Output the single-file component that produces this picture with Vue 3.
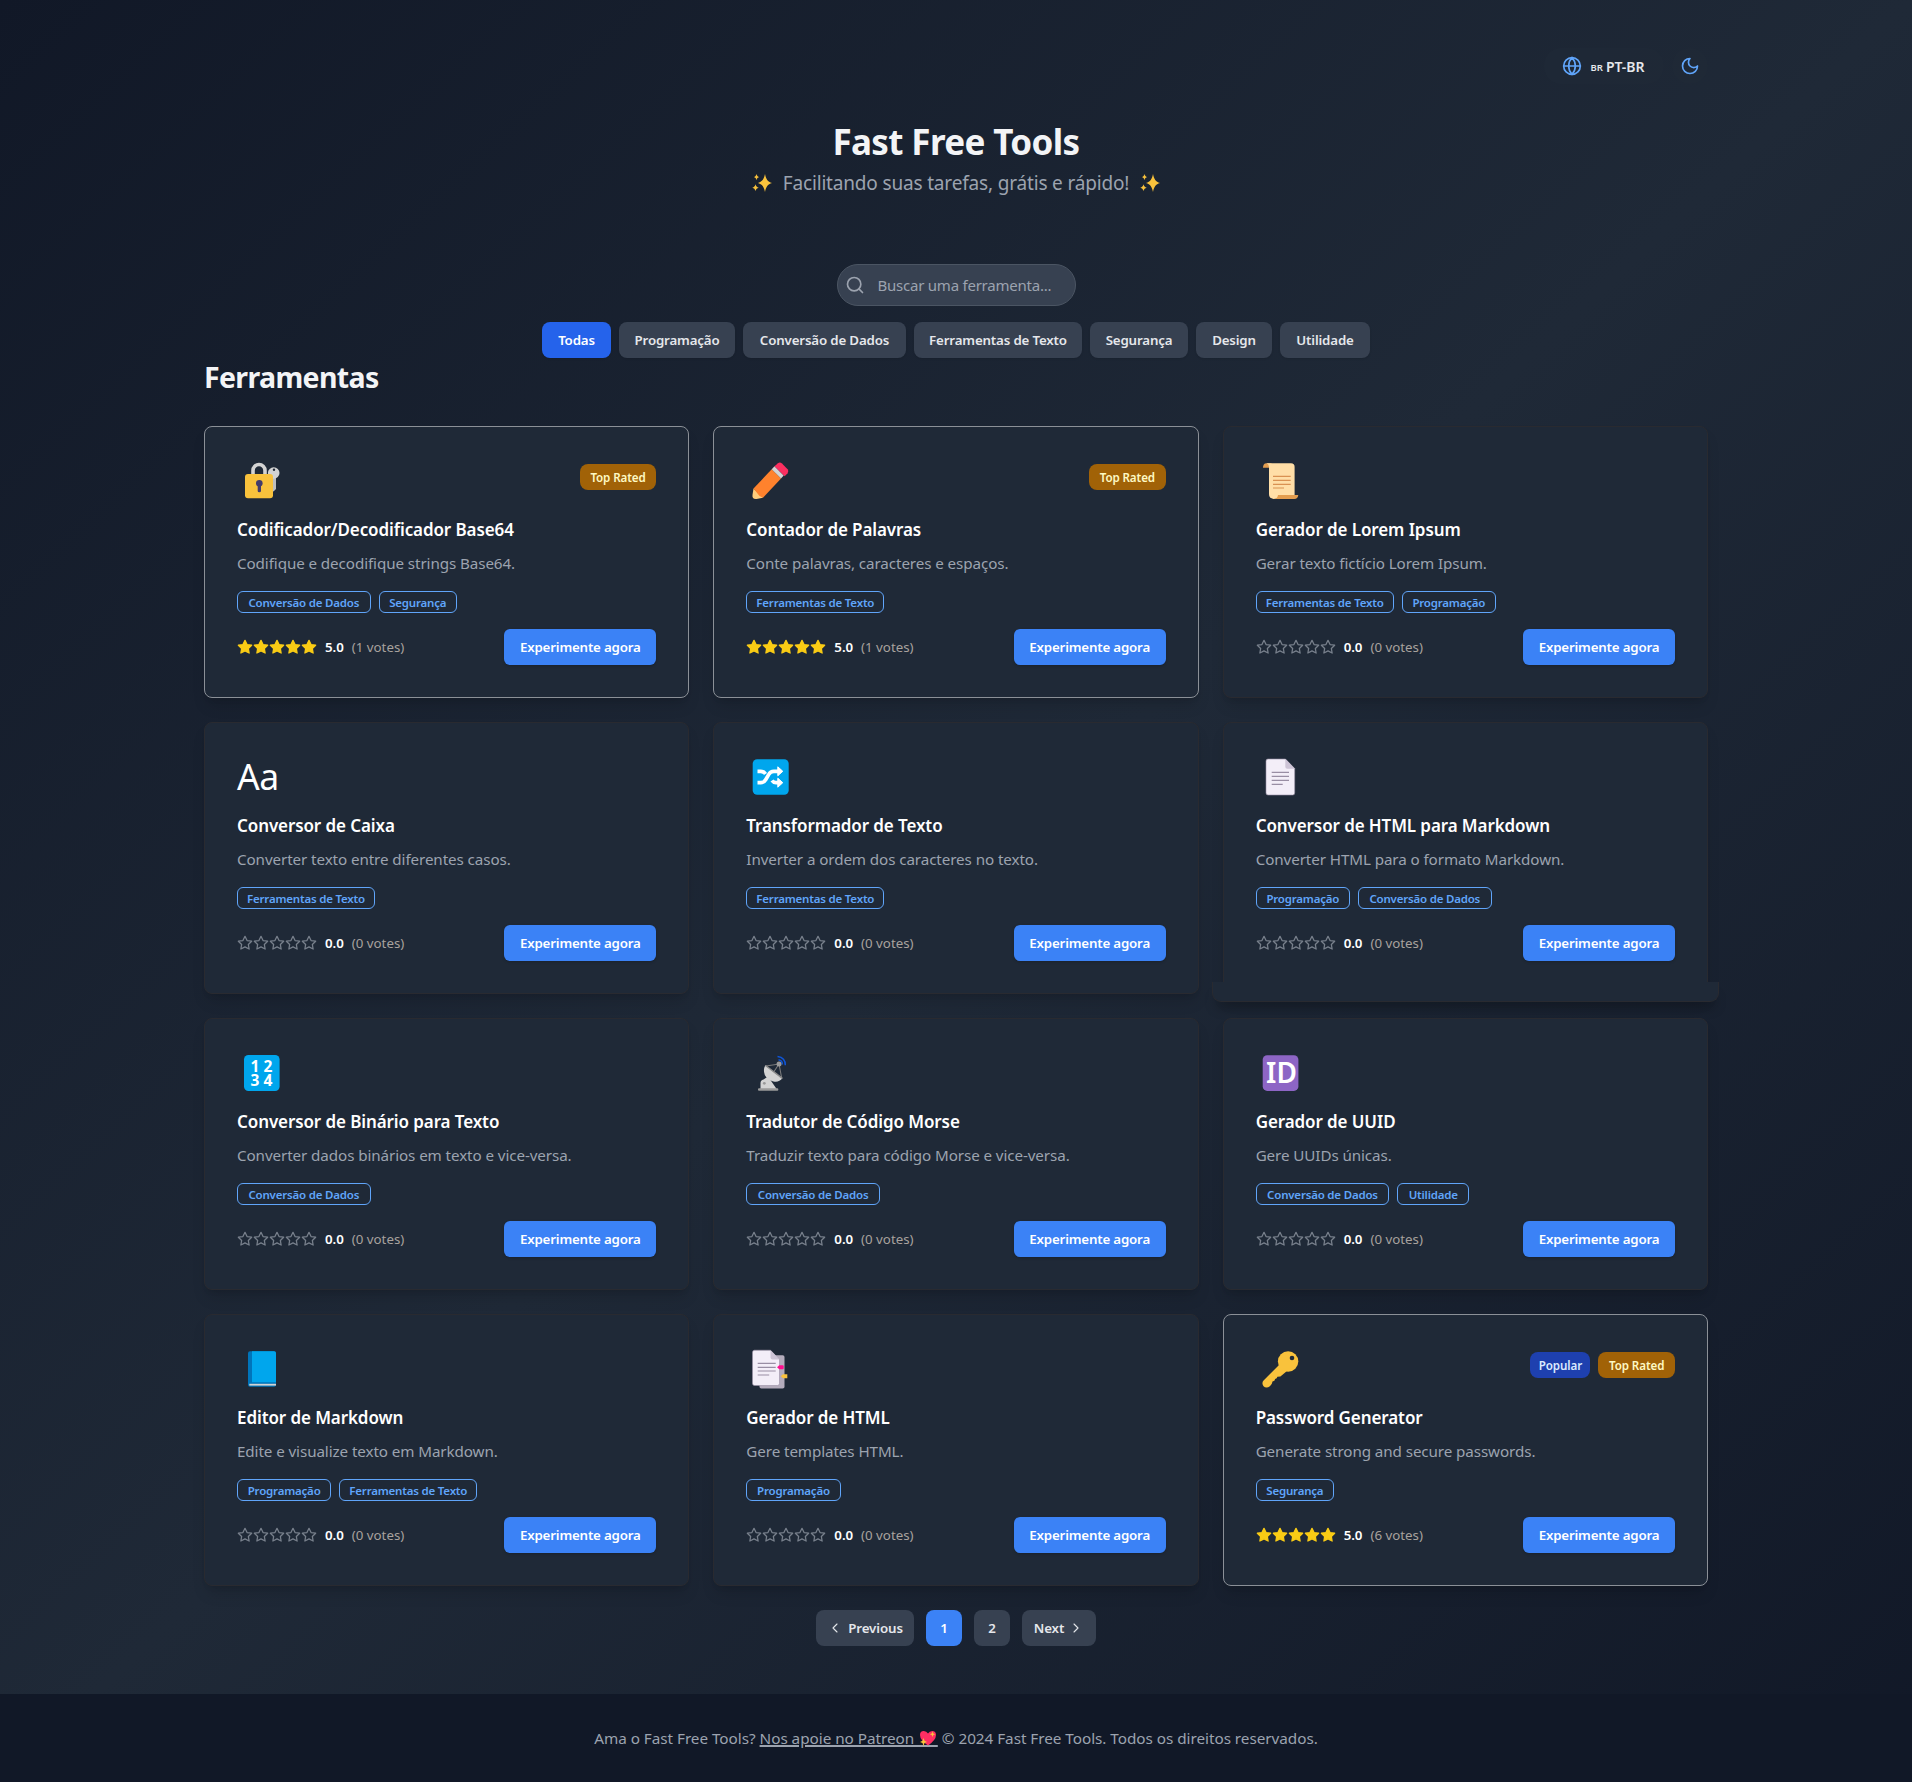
<script setup>
const filters = ['Todas', 'Programação', 'Conversão de Dados', 'Ferramentas de Texto', 'Segurança', 'Design', 'Utilidade']
const filterWidths = [69, 116, 163, 168, 98, 76, 90]

const tools = [
  { icon: 'lock', title: 'Codificador/Decodificador Base64', text: 'Codifique e decodifique strings Base64.', tags: ['Conversão de Dados', 'Segurança'], score: '5.0', votes: 1, badges: ['Top Rated'] },
  { icon: 'pencil', title: 'Contador de Palavras', text: 'Conte palavras, caracteres e espaços.', tags: ['Ferramentas de Texto'], score: '5.0', votes: 1, badges: ['Top Rated'] },
  { icon: 'scroll', title: 'Gerador de Lorem Ipsum', text: 'Gerar texto fictício Lorem Ipsum.', tags: ['Ferramentas de Texto', 'Programação'], score: '0.0', votes: 0, badges: [] },
  { icon: 'case', title: 'Conversor de Caixa', text: 'Converter texto entre diferentes casos.', tags: ['Ferramentas de Texto'], score: '0.0', votes: 0, badges: [] },
  { icon: 'shuffle', title: 'Transformador de Texto', text: 'Inverter a ordem dos caracteres no texto.', tags: ['Ferramentas de Texto'], score: '0.0', votes: 0, badges: [] },
  { icon: 'page', title: 'Conversor de HTML para Markdown', text: 'Converter HTML para o formato Markdown.', tags: ['Programação', 'Conversão de Dados'], score: '0.0', votes: 0, badges: [], raised: true },
  { icon: 'numbers', title: 'Conversor de Binário para Texto', text: 'Converter dados binários em texto e vice-versa.', tags: ['Conversão de Dados'], score: '0.0', votes: 0, badges: [] },
  { icon: 'dish', title: 'Tradutor de Código Morse', text: 'Traduzir texto para código Morse e vice-versa.', tags: ['Conversão de Dados'], score: '0.0', votes: 0, badges: [] },
  { icon: 'id', title: 'Gerador de UUID', text: 'Gere UUIDs únicas.', tags: ['Conversão de Dados', 'Utilidade'], score: '0.0', votes: 0, badges: [] },
  { icon: 'book', title: 'Editor de Markdown', text: 'Edite e visualize texto em Markdown.', tags: ['Programação', 'Ferramentas de Texto'], score: '0.0', votes: 0, badges: [] },
  { icon: 'tabs', title: 'Gerador de HTML', text: 'Gere templates HTML.', tags: ['Programação'], score: '0.0', votes: 0, badges: [] },
  { icon: 'key', title: 'Password Generator', text: 'Generate strong and secure passwords.', tags: ['Segurança'], score: '5.0', votes: 6, badges: ['Popular', 'Top Rated'] },
]
const tagWidths = { 'Conversão de Dados': 133.6, 'Segurança': 78.4, 'Ferramentas de Texto': 138, 'Programação': 94.3, 'Utilidade': 72 }
</script>

<template>
  <div class="page">
    <div class="container">
      <div class="topbar">
        <button class="lang">
          <svg class="i20" viewBox="0 0 24 24"><circle cx="12" cy="12" r="10" /><path d="M12 2a14.5 14.5 0 0 0 0 20 14.5 14.5 0 0 0 0-20M2 12h20" /></svg>
          <span class="flag">BR</span><span class="code">PT-BR</span>
        </button>
        <button class="theme">
          <svg class="i20" viewBox="0 0 24 24"><path d="M12 3a6 6 0 0 0 9 9 9 9 0 1 1-9-9Z" /></svg>
        </button>
      </div>

      <header class="hero">
        <h1>Fast Free Tools</h1>
        <p class="sub">
          <svg class="spark" viewBox="0 0 20 18"><path d="M13 0c1.200 5.500 2.500 7.400 7 9-4.500 1.600-5.800 3.500-7 9-1.200-5.500-2.500-7.400-7-9 4.500-1.600 5.800-3.500 7-9ZM4.500 0c.6 2 1.100 2.600 2.700 3.100-1.600.5-2.100 1.100-2.700 3.100-.6-2-1.100-2.600-2.700-3.100C3.400 2.600 3.900 2 4.500 0ZM3.500 10.300c.7 2.200 1.300 2.800 3.200 3.400-1.900.6-2.500 1.200-3.200 3.400-.7-2.200-1.300-2.800-3.200-3.400 1.900-.6 2.500-1.200 3.200-3.400Z" /></svg>
          <span>Facilitando suas tarefas, grátis e rápido!</span>
          <svg class="spark" viewBox="0 0 20 18"><path d="M13 0c1.200 5.500 2.500 7.400 7 9-4.500 1.600-5.800 3.500-7 9-1.200-5.500-2.500-7.400-7-9 4.500-1.600 5.800-3.500 7-9ZM4.500 0c.6 2 1.100 2.600 2.700 3.100-1.600.5-2.100 1.100-2.700 3.100-.6-2-1.100-2.600-2.700-3.100C3.400 2.600 3.900 2 4.500 0ZM3.500 10.300c.7 2.200 1.300 2.800 3.200 3.400-1.900.6-2.500 1.200-3.200 3.400-.7-2.200-1.300-2.800-3.200-3.400 1.900-.6 2.500-1.200 3.200-3.400Z" /></svg>
        </p>
      </header>

      <div class="search">
        <svg class="i20" viewBox="0 0 24 24"><circle cx="11" cy="11" r="8" /><path d="m21 21-4.300-4.300" /></svg>
        <span>Buscar uma ferramenta...</span>
      </div>

      <nav class="filters">
        <button v-for="(f, i) in filters" :key="f" class="filter" :class="{ active: i === 0 }" :style="{ width: filterWidths[i] + 'px' }">{{ f }}</button>
      </nav>

      <h2>Ferramentas</h2>

      <main class="grid">
        <article v-for="t in tools" :key="t.title" class="card" :class="{ top: t.badges.length, raised: t.raised }">
          <div class="head">
            <span v-if="t.icon === 'case'" class="letters">Aa</span>
            <svg v-else class="emoji" viewBox="0 0 50 40">
              <g v-if="t.icon === 'lock'">
                <path d="M16 17v-5.500a6 6 0 0 1 12 0V17" fill="none" stroke="#d3d3d3" stroke-width="3.600" />
                <path d="M34 16h5v14l-2.500 2.500L34 31Z" fill="#bebebe" /><circle cx="36.700" cy="14" r="5.800" fill="#d3d3d3" /><circle cx="37" cy="10.800" r="1.200" fill="#212937" />
                <rect x="8" y="15" width="28" height="24.300" rx="3" fill="#f9c23c" />
                <circle cx="22.300" cy="24.200" r="3.300" fill="#433b6b" /><rect x="20.700" y="25" width="3.300" height="8.300" rx="1.600" fill="#433b6b" />
              </g>
              <g v-else-if="t.icon === 'pencil'">
                <path d="M7.500 29.500 17 38.800l-6.500 1.100c-3 .3-4.300-1-4-3.900Z" fill="#ffce7c" />
                <path d="M25.700 10.300 35 19.500 17 38.800 13.500 37 7.500 29.500Z" fill="#ff822d" />
                <path d="m28.500 7.300 9.200 9.200-2.700 3-9.300-9.200Z" fill="#d3d3d3" />
                <path d="M32 4.200q2-1.400 4 .4l5.600 5.600q1.700 2 0 4l-2.900 3-10.200-9.900Z" fill="#fb2f60" />
              </g>
              <g v-else-if="t.icon === 'scroll'">
                <path d="M10.500 4.200h5v4.500H7c0-2.500 1-4.500 3.500-4.500Z" fill="#e39d4f" />
                <path d="M10.500 4.200H35q3.600 0 3.600 3.600V38L17.500 40q-4.500-.5-4.500-5V8q0-3-2.500-3.800Z" fill="#ffdea7" />
                <path d="M22 36h20.300q-.5 4-4 4H17.500q4 0 4.500-4Z" fill="#e39d4f" />
                <path d="M17 17.300h17.700M17 21.300h17.700M17 25.300h17.700M17 29h11" stroke="#d99152" stroke-width="1.200" />
              </g>
              <g v-else-if="t.icon === 'shuffle'">
                <rect x="6.700" y="4.200" width="36" height="35.600" rx="4.500" fill="#00a6ed" />
                <path d="M11.500 16.300h3.300q3 0 4.700 2.700M11.500 27.700h3.300q3.200 0 5-3.200l3-5.200q1.600-3 5-3H33M26 25.500q1.500 2.200 4 2.200h3" fill="none" stroke="#fff" stroke-width="3.700" />
                <path d="m31.800 11.800 5 4.500-5 4.500ZM31.800 23.200l5 4.500-5 4.500Z" fill="#fff" stroke="#fff" stroke-linejoin="round" />
              </g>
              <g v-else-if="t.icon === 'page'">
                <path d="M12 4h17.500l9.200 9.500V38q0 2-2 2H12q-2 0-2-2V6q0-2 2-2Z" fill="#f3eef8" stroke="#998ea4" stroke-width=".6" />
                <path d="M29.300 4l9.400 9.700h-7.400q-2 0-2-2Z" fill="#cdc4d6" />
                <path d="M15.700 17.300H33M15.700 21.300H33M15.700 25.300H33M15.700 29.300h11" stroke="#998ea4" stroke-width="1.200" />
              </g>
              <g v-else-if="t.icon === 'numbers'" fill="#fff" font-size="15.500" text-anchor="middle" class="digits">
                <rect x="7" y="4" width="35.600" height="36" rx="4.500" fill="#00a6ed" />
                <text x="18" y="20.500">1</text><text x="31" y="20.500">2</text><text x="18" y="35.300">3</text><text x="31" y="35.300">4</text>
              </g>
              <g v-else-if="t.icon === 'dish'">
                <path d="m20 15 13-2 2.500 13M27 22l6-9" fill="none" stroke="#7c7c7c" stroke-width="1.100" />
                <path d="M31.500 5.500q8 1 7.800 8.800M32.500 8.800q4 .8 3.900 4.700" fill="none" stroke="#0f55d8" stroke-width="1.500" />
                <path d="M14.500 38v-6q0-3 3-3.500l4.500-3 9 13Z" fill="#d3d3d3" /><circle cx="18.300" cy="32.300" r="1.400" fill="#999" />
                <path d="M19.300 14.300 36.400 27.300q-3.500 4.500-9 3.200-6-1.500-8.600-6.500-2-5 .5-9.700Z" fill="#d3d3d3" />
                <path d="M19.500 14.500 36.400 27.300" stroke="#8b8b8b" stroke-width="1.500" />
                <circle cx="33" cy="13" r="2.500" fill="#9b9b9b" /><rect x="12" y="37.300" width="20.300" height="2.500" rx="1" fill="#9b9b9b" />
              </g>
              <g v-else-if="t.icon === 'id'" fill="#fff">
                <rect x="6.700" y="4.200" width="35.700" height="35.700" rx="4.500" fill="#8d65c5" />
                <text x="25.500" y="32.300" font-size="28" text-anchor="middle" class="id">ID</text>
              </g>
              <g v-else-if="t.icon === 'book'">
                <rect x="11" y="4.300" width="28" height="35.500" rx="2" fill="#0074ba" />
                <path d="M15 4.300h22q2 0 2 2v29H15Z" fill="#00a6ed" /><path d="M12.300 37.700H39" stroke="#d3d3d3" stroke-width="1.800" />
              </g>
              <g v-else-if="t.icon === 'tabs'">
                <rect x="13.500" y="8.200" width="25" height="33.400" rx="1.800" fill="#b4acbc" />
                <path d="M8.500 3.200h16l9 9.300v24q0 2-2 2h-23q-2 0-2-2V5.200q0-2 2-2Z" fill="#f3eef8" stroke="#998ea4" stroke-width=".6" />
                <path d="M24.500 3.200v7.300q0 2 2 2h7Z" fill="#cdc4d6" />
                <path d="M11.700 16.300h18M11.700 20.300h18M11.700 24h18M11.700 28h11.500" stroke="#998ea4" stroke-width="1.200" />
                <path d="m31 20.300 2.300-2h3.400q1 0 1 1v2q0 1-1 1h-3.400Z" fill="#ff0f8f" /><path d="m34.700 29.300 2.300-2h4.300v4H37Z" fill="#f9c23c" />
              </g>
              <g v-else-if="t.icon === 'key'">
                <path d="M23 18 7.800 33.200a4 4 0 0 0 5.700 6.200q2.500-1.500 3-5 2.500-.2 2.600-2.400 2-.2 2.300-2.300l3-.2L31 24Z" fill="#f9c23c" />
                <circle cx="32.100" cy="14.500" r="10.200" fill="#f9c23c" /><circle cx="36" cy="11" r="2.300" fill="#1f2937" />
              </g>
            </svg>
            <div class="badges"><span v-for="b in t.badges" :key="b" class="badge" :class="{ popular: b === 'Popular' }">{{ b }}</span></div>
          </div>
          <h3>{{ t.title }}</h3>
          <p class="desc">{{ t.text }}</p>
          <div class="tags"><span v-for="g in t.tags" :key="g" class="tag" :style="{ width: tagWidths[g] + 'px' }">{{ g }}</span></div>
          <div class="foot">
            <div class="rating">
              <svg v-for="n in 5" :key="n" class="star" :class="{ on: t.score === '5.0' }" viewBox="0 0 24 24"><path d="m12 2 3.090 6.260L22 9.270l-5 4.870 1.180 6.880L12 17.770l-6.180 3.250L7 14.140 2 9.270l6.910-1.010Z" /></svg>
              <span class="score">{{ t.score }}</span><span class="votes">({{ t.votes }} votes)</span>
            </div>
            <button class="try">Experimente agora</button>
          </div>
        </article>
      </main>

      <nav class="pager">
        <button class="pg prev"><svg class="i16" viewBox="0 0 24 24"><path d="m15 18-6-6 6-6" /></svg>Previous</button>
        <button class="pg num current">1</button>
        <button class="pg num">2</button>
        <button class="pg next">Next<svg class="i16" viewBox="0 0 24 24"><path d="m9 18 6-6-6-6" /></svg></button>
      </nav>
    </div>

    <footer>
      <span>Ama o Fast Free Tools?</span>
      <a>Nos apoie no Patreon&nbsp;&nbsp;&nbsp;&nbsp;&nbsp;&nbsp;<svg class="heart" viewBox="0 0 18 16"><path d="M9 15.500Q1 10 1 5 1 1 4.800 1 7.500 1 9 3.600 10.500 1 13.200 1 17 1 17 5q0 5-8 10.500Z" fill="#ff2e63" /><path d="M13.500 1.500l.8 2 1.900.8-1.900.8-.8 2-.8-2-1.900-.8 1.900-.8ZM4.500 8l1 2.800L8 12l-2.500 1.100-1 2.900-1-2.900L1 12l2.500-1.200Z" fill="#f9c23c" /></svg></a>
      <span>© 2024 Fast Free Tools. Todos os direitos reservados.</span>
    </footer>
  </div>
</template>

<style>
body { margin: 0; background: #111827; }
</style>

<style scoped>
* { box-sizing: border-box; }
.page { min-height: 1782px; font-family: "Noto Sans", "Open Sans", sans-serif; color: #f3f4f6; background: linear-gradient(to bottom right, #111827, #1f2937, #111827); display: flex; flex-direction: column; }
button { font: inherit; border: 0; padding: 0; color: inherit; display: flex; align-items: center; justify-content: center; white-space: nowrap; }
h1, h2, h3, p { margin: 0; white-space: nowrap; }
svg { display: block; flex: none; }
.i20 { width: 20px; height: 20px; fill: none; stroke: #60a5fa; stroke-width: 2; stroke-linecap: round; stroke-linejoin: round; }
.i16 { width: 16px; height: 16px; fill: none; stroke: #e5e7eb; stroke-width: 1.6; stroke-linecap: round; stroke-linejoin: round; }
.container { width: 1504px; margin: 0 auto; padding-top: 48px; display: flex; flex-direction: column; height: 1694px; }
.topbar { display: flex; justify-content: flex-end; gap: 8px; }
.lang { width: 120px; height: 36px; border-radius: 18px; background: rgba(31, 41, 55, .8); font-weight: 600; color: #e5e7eb; justify-content: flex-start; padding-left: 18px; }
.flag { font-size: 9.500px; margin: 3px 3px 0 8.500px; letter-spacing: 0; }
.code { font-size: 14px; letter-spacing: -.05px; }
.theme { width: 36px; height: 36px; border-radius: 18px; background: rgba(31, 41, 55, .8); }
.hero { margin-top: 38px; display: flex; flex-direction: column; align-items: center; }
h1 { font-size: 35px; line-height: 40px; font-weight: 700; letter-spacing: -.63px; }
.sub { margin-top: 7px; font-size: 19px; line-height: 28px; color: #9ca3af; letter-spacing: -.17px; display: flex; align-items: center; gap: 11px; }
.spark { width: 20px; height: 18px; fill: #f9c23c; }
.search { align-self: center; margin-top: 67px; width: 239px; height: 42px; border: 1px solid #4b5563; border-radius: 21px; background: #374151; display: flex; align-items: center; padding-left: 7px; gap: 13px; color: #9ca3af; font-size: 15px; letter-spacing: -.23px; white-space: nowrap; }
.search .i20 { stroke: #9ca3af; }
.filters { display: flex; justify-content: center; gap: 8px; margin-top: 16px; }
.filter { height: 36px; border-radius: 8px; background: #374151; color: #e5e7eb; font-size: 13.300px; font-weight: 600; letter-spacing: -.16px; box-shadow: 0 1px 2px rgba(0, 0, 0, .1); }
.filter.active { background: #2563eb; color: #fff; }
h2 { font-size: 28.500px; line-height: 36px; font-weight: 700; letter-spacing: -.65px; margin-top: 1px; }
.grid { display: grid; grid-template-columns: repeat(3, 1fr); gap: 24px; margin-top: 31px; }
.card { position: relative; height: 272px; padding: 32px; border: 1px solid #292a30; border-radius: 8px; background: #1f2937; box-shadow: 0 10px 15px -3px rgba(0, 0, 0, .13), 0 4px 6px -4px rgba(0, 0, 0, .13); }
.card.top { border-color: #8b9097; }
.card.raised::after { content: ""; position: absolute; left: -12px; right: -12px; top: 259px; height: 19px; background: #1f2937; border: 1px solid #292a30; border-top: 0; border-radius: 0 0 9px 9px; box-shadow: 0 10px 12px -4px rgba(0, 0, 0, .25); }
.head { height: 40px; display: flex; justify-content: space-between; }
.emoji { width: 50px; height: 40px; overflow: visible; }
.digits { font-weight: 700; }
.id { font-weight: 600; }
.letters { font-size: 35.500px; line-height: 42px; letter-spacing: -.5px; color: #fff; }
.badges { display: flex; gap: 8px; padding-top: 5px; }
.badge { height: 26px; width: 76.600px; line-height: 27px; text-align: center; border-radius: 8px; background: #a16207; color: #fef9c3; font-size: 11.600px; font-weight: 600; letter-spacing: -.1px; }
.badge.popular { width: 60px; background: #1e40af; color: #dbeafe; }
h3 { margin-top: 17px; font-size: 17px; line-height: 28px; font-weight: 600; color: #fff; letter-spacing: -.1px; }
.desc { margin-top: 7px; font-size: 15.200px; line-height: 24px; color: #9ca3af; letter-spacing: -.09px; }
.tags { display: flex; gap: 8px; margin-top: 16px; }
.tag { height: 22px; border: 1px solid #60a5fa; border-radius: 6px; font-size: 11.500px; line-height: 21px; font-weight: 600; color: #60a5fa; text-align: center; white-space: nowrap; letter-spacing: -.2px; }
.foot { display: flex; align-items: center; justify-content: space-between; margin-top: 16px; }
.rating { display: flex; align-items: center; font-size: 13.300px; line-height: 20px; }
.star { width: 16px; height: 16px; fill: none; stroke: #78808c; stroke-width: 1.9; stroke-linejoin: round; }
.star.on { fill: #facc15; stroke: #facc15; }
.score { margin-left: 8px; font-weight: 600; color: #fff; letter-spacing: -.05px; }
.votes { margin-left: 8px; color: #a8a29e; letter-spacing: 0; }
.try { width: 152px; height: 36px; border-radius: 6px; background: #3b82f6; color: #fff; font-size: 13.300px; font-weight: 600; letter-spacing: -.18px; box-shadow: 0 1px 3px rgba(0, 0, 0, .2); }
.pager { display: flex; justify-content: center; gap: 12px; margin-top: 24px; }
.pg { height: 36px; border-radius: 8px; background: #374151; color: #e5e7eb; font-size: 13.300px; font-weight: 600; letter-spacing: -.1px; }
.num { width: 36px; }
.current { background: #3b82f6; color: #fff; }
.prev { width: 98px; gap: 5px; }
.next { width: 74px; gap: 4px; }
footer { height: 88px; background: #111827; display: flex; align-items: center; justify-content: center; gap: 4px; font-size: 15.300px; line-height: 24px; letter-spacing: -.04px; color: #9ca3af; white-space: nowrap; }
a { position: relative; color: #9ca3af; text-decoration: underline; text-decoration-thickness: 2px; text-underline-offset: 1px; display: block; }
.heart { position: absolute; right: 1px; top: 4px; width: 18px; height: 16px; }
</style>
